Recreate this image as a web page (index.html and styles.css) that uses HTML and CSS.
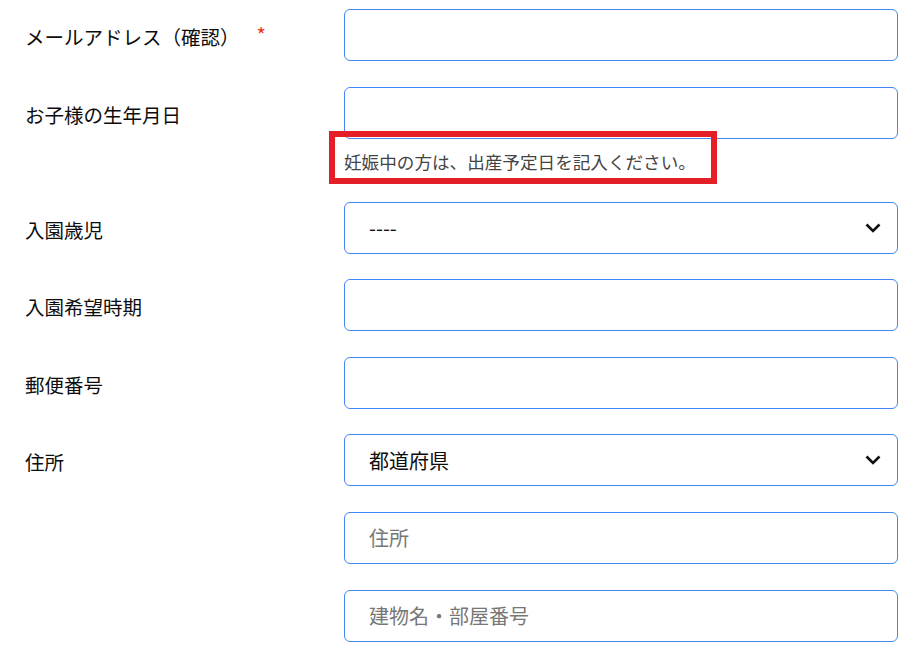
FILE: index.html
```html
<!DOCTYPE html>
<html lang="ja">
<head>
<meta charset="utf-8">
<title>フォーム</title>
<link rel="stylesheet" href="styles.css">
</head>
<body>
<form class="form">
  <div class="row">
    <label class="label">メールアドレス（確認）<span class="req">*</span></label>
    <div class="field"><input class="input" type="text"></div>
  </div>
  <div class="row">
    <label class="label">お子様の生年月日</label>
    <div class="field">
      <input class="input" type="text">
      <p class="hint"><span class="mark"></span>妊娠中の方は、出産予定日を記入ください。</p>
    </div>
  </div>
  <div class="row">
    <label class="label">入園歳児</label>
    <div class="field">
      <div class="select-wrap">
        <select class="input select"><option>----</option></select>
        <svg class="chev" width="16" height="10" viewBox="0 0 16 10"><path d="M1.5 1.5 L8 8 L14.5 1.5" fill="none" stroke="#111" stroke-width="2.6"/></svg>
      </div>
    </div>
  </div>
  <div class="row">
    <label class="label">入園希望時期</label>
    <div class="field"><input class="input" type="text"></div>
  </div>
  <div class="row">
    <label class="label">郵便番号</label>
    <div class="field"><input class="input" type="text"></div>
  </div>
  <div class="row">
    <label class="label">住所</label>
    <div class="field stack">
      <div class="select-wrap">
        <select class="input select"><option>都道府県</option></select>
        <svg class="chev" width="16" height="10" viewBox="0 0 16 10"><path d="M1.5 1.5 L8 8 L14.5 1.5" fill="none" stroke="#111" stroke-width="2.6"/></svg>
      </div>
      <input class="input" type="text" placeholder="住所">
      <input class="input" type="text" placeholder="建物名・部屋番号">
    </div>
  </div>
</form>
</body>
</html>
```
FILE: styles.css
```css
* { box-sizing: border-box; }
html, body { margin: 0; padding: 0; background: #fff; }
body {
  font-family: "Noto Sans CJK JP", "Noto Sans", sans-serif;
  color: #111;
}
.form {
  display: flex;
  flex-direction: column;
  gap: 25.6px;
  padding: 9px 24px 0 25px;
}
.row {
  display: flex;
  align-items: flex-start;
}
.label {
  width: 319px;
  flex: none;
  height: 52px;
  padding-top: 4px;
  font-size: 19.5px;
  line-height: 48px;
  color: #0d0d0d;
  display: flex;
  align-items: center;
}
.req {
  color: #e8371e;
  font-size: 20px;
  margin-left: 17px;
  margin-top: -4px;
}
.field {
  width: 554px;
  flex: none;
}
.stack {
  display: flex;
  flex-direction: column;
  gap: 25.6px;
}
.input {
  display: block;
  width: 100%;
  height: 52px;
  border: 1px solid #4287f2;
  border-radius: 6px;
  background: #fff;
  padding: 0 24px;
  font-family: inherit;
  font-size: 20px;
  color: #0d0d0d;
  outline: none;
  margin: 0;
}
.input::placeholder { color: #777; }
.select-wrap { position: relative; }
.select {
  appearance: none;
  -webkit-appearance: none;
}
.chev {
  position: absolute;
  right: 17px;
  top: 21px;
  pointer-events: none;
}
.hint {
  position: relative;
  margin: 11px 0 2.4px 0;
  font-size: 17.6px;
  line-height: 24px;
  color: #444;
}
.mark {
  position: absolute;
  left: -15.5px;
  top: -18.5px;
  width: 388px;
  height: 53px;
  border: 6px solid #e41f26;
}
```
